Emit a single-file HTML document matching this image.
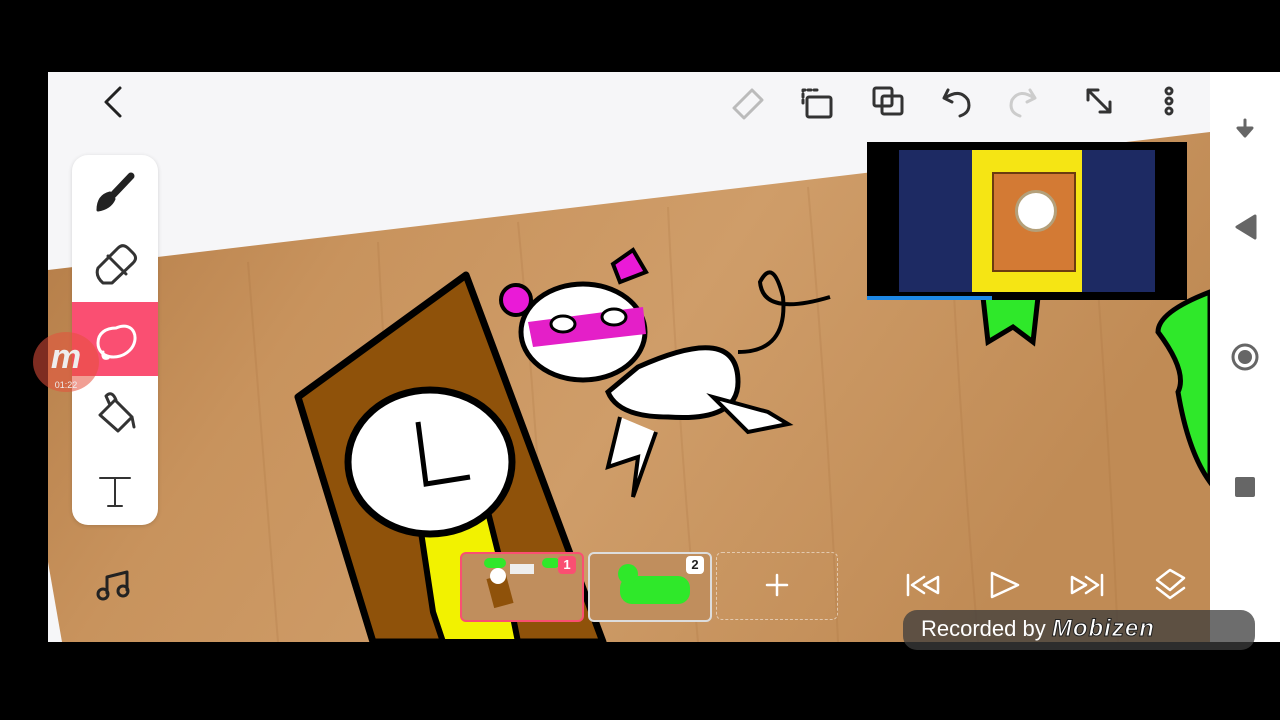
<!DOCTYPE html>
<html><head><meta charset="utf-8"><style>
body{margin:0;width:1280px;height:720px;background:#000;overflow:hidden;font-family:"Liberation Sans",sans-serif;position:relative}
.app{position:absolute;left:48px;top:72px;width:1162px;height:570px;background:#f6f6f8;overflow:hidden}
.nav{position:absolute;left:1210px;top:72px;width:70px;height:570px;background:#fff}
.tool{position:absolute;left:72px;top:155px;width:86px;height:370px;background:#fff;border-radius:16px;box-shadow:0 1px 4px rgba(0,0,0,.15)}
.sel{position:absolute;left:72px;top:302px;width:86px;height:74px;background:#fa4f72}
.rec{position:absolute;left:903px;top:610px;width:352px;height:40px;background:rgba(60,60,60,.75);border-radius:14px;color:#fff;font-size:22px;line-height:38px;padding-left:18px;box-sizing:border-box}
.rec b{font-style:italic;font-weight:900;font-size:24px;letter-spacing:1px;color:#fff;-webkit-text-stroke:1px #222}
</style></head><body>
<div class="app">
<svg width="1162" height="570" style="position:absolute;left:0;top:0">
<defs><linearGradient id="w" x1="0" x2="1" y1="0" y2="0.3">
<stop offset="0" stop-color="#b27a45"/><stop offset="0.3" stop-color="#c8935d"/><stop offset="0.6" stop-color="#cf9d69"/><stop offset="1" stop-color="#c08b55"/></linearGradient></defs>
<polygon points="0,198 1162,60 1162,570 14,570 0,490" fill="url(#w)"/>
<g stroke="#a06a36" stroke-width="2" opacity=".18" fill="none">
<path d="M200,190 Q215,380 230,570 M330,170 Q340,370 360,570 M470,150 Q490,360 500,570 M620,135 Q630,350 650,570 M760,115 Q780,340 790,570 M900,100 Q910,330 930,570 M1040,85 Q1060,330 1070,570"/></g>
<path d="M250,325 L418,203 L555,570 L325,570 Z" fill="#8f520a" stroke="#000" stroke-width="7" stroke-linejoin="round"/>
<path d="M370,440 L385,540 L395,570 L470,570 L460,520 L440,440 Z" fill="#f2f200" stroke="#000" stroke-width="6"/>
<ellipse cx="382" cy="390" rx="82" ry="72" fill="#fff" stroke="#000" stroke-width="7"/>
<path d="M370,350 L378,412 L422,405" stroke="#000" stroke-width="5" fill="none"/>
<path d="M590,295 Q690,250 690,310 Q690,350 620,345 Q570,345 560,320 Z" fill="#fff" stroke="#000" stroke-width="5"/>
<path d="M572,345 L560,395 L590,385 L585,425 L608,360" fill="#fff" stroke="#000" stroke-width="4"/>
<path d="M665,325 L720,340 L740,352 L700,360 Z" fill="#fff" stroke="#000" stroke-width="4"/>
<ellipse cx="535" cy="260" rx="62" ry="48" fill="#fff" stroke="#000" stroke-width="5"/>
<path d="M480,250 L595,235 L598,262 L485,275 Z" fill="#e41fc8"/>
<circle cx="468" cy="228" r="15" fill="#ea1ad7" stroke="#000" stroke-width="4"/>
<path d="M565,192 L585,178 L598,200 L572,210 Z" fill="#ea1ad7" stroke="#000" stroke-width="4"/>
<ellipse cx="515" cy="252" rx="12" ry="8" fill="#fff" stroke="#000" stroke-width="3"/><ellipse cx="566" cy="245" rx="12" ry="8" fill="#fff" stroke="#000" stroke-width="3"/>
<path d="M690,280 Q740,280 735,225 Q725,185 712,210 Q715,245 782,225" stroke="#000" stroke-width="4" fill="none"/>
<path d="M935,225 L990,225 L985,270 L965,255 L940,270 Z" fill="#2fe82a" stroke="#000" stroke-width="5"/>
<path d="M1162,220 Q1110,240 1110,260 Q1140,300 1130,320 Q1140,380 1162,410 Z" fill="#2fe82a" stroke="#000" stroke-width="5"/>
</svg>
</div>
<div class="nav"></div>
<div style="position:absolute;left:867px;top:142px;width:320px;height:158px;background:#000">
<div style="position:absolute;left:32px;top:8px;width:256px;height:142px;background:#1d2a63"></div>
<div style="position:absolute;left:105px;top:8px;width:110px;height:142px;background:#f5e514"></div>
<div style="position:absolute;left:125px;top:30px;width:80px;height:96px;background:#d37a34;border:2px solid #6b3c10"></div>
<div style="position:absolute;left:148px;top:48px;width:36px;height:36px;border-radius:50%;background:#fff;border:3px solid #b4a07a"></div>
<div style="position:absolute;left:0;top:154px;width:125px;height:4px;background:#1e88e5"></div>
</div>
<div class="tool"></div><div class="sel"></div>
<svg width="1280" height="720" style="position:absolute;left:0;top:0" fill="none" stroke="#333" stroke-width="3" stroke-linecap="round" stroke-linejoin="round">
<path d="M120,88 L106,102 L120,116" stroke="#222"/>
<path d="M131,176 L112,196" stroke="#222" stroke-width="7"/><path d="M110,193 Q98,196 98,210 Q110,208 114,199 Z" fill="#222" stroke="#222"/>
<path d="M98,268 L118,248 Q123,243 129,249 L133,253 Q138,258 133,263 L112,283 L103,283 Q95,276 98,268 Z M108,256 L126,274"/>
<path d="M116,328 C135,320 140,340 130,350 C118,362 98,358 98,343 C98,333 106,328 116,328 Z M103,352 Q102,360 108,358" stroke="#fff"/>
<path d="M100,415 L115,400 L132,417 L118,431 Z M110,405 L106,396 Q112,390 116,400 M132,417 L134,427"/>
<path d="M100,478 L130,478 M115,478 L115,506 M108,506 L122,506" stroke-width="2"/>
<path d="M107,593 L107,577 L127,572 L127,590 M107,577 L127,572" stroke="#222"/><circle cx="103" cy="594" r="5" stroke="#222"/><circle cx="123" cy="591" r="5" stroke="#222"/>
<path d="M734,108 L752,90 L762,100 L744,118 Z" stroke="#bbb"/>
<rect x="807" y="97" width="24" height="20" rx="2" stroke="#333"/><path d="M803,103 L803,90 L818,90" stroke-dasharray="3 3"/>
<rect x="874" y="88" width="18" height="18" rx="2"/><rect x="882" y="96" width="20" height="18" rx="2"/>
<path d="M948,90 L944,98 L952,102 M945,98 Q960,88 968,100 Q972,112 960,116"/>
<path d="M1030,90 L1035,98 L1027,102 M1034,98 Q1020,88 1012,100 Q1008,112 1020,116" stroke="#ccc"/>
<path d="M1088,90 L1110,112 M1088,90 L1088,100 M1088,90 L1098,90 M1110,112 L1110,102 M1110,112 L1100,112"/>
<circle cx="1169" cy="91" r="3"/><circle cx="1169" cy="101" r="3"/><circle cx="1169" cy="111" r="3"/>
<path d="M1245,120 L1245,128 M1238,128 L1252,128 L1245,136 Z" fill="#666" stroke="#666"/>
<path d="M1255,216 L1237,227 L1255,238 Z" fill="#666" stroke="#666"/>
<circle cx="1245" cy="357" r="12" stroke="#666"/><circle cx="1245" cy="357" r="7" fill="#666" stroke="none"/>
<rect x="1235" y="477" width="20" height="20" rx="2" fill="#666" stroke="none"/>
<path d="M777,575 L777,595 M767,585 L787,585" stroke="#fff" stroke-width="2.5"/>
<path d="M908,575 L908,595 M938,577 L924,585 L938,593 Z M924,577 L912,585 L924,593" stroke="#fff" stroke-width="2.5"/>
<path d="M992,573 L1018,585 L992,597 Z" stroke="#fff" stroke-width="2.5"/>
<path d="M1102,575 L1102,595 M1072,577 L1086,585 L1072,593 Z M1086,577 L1098,585 L1086,593" stroke="#fff" stroke-width="2.5"/>
<path d="M1157,580 L1170,570 L1184,578 L1170,590 Z M1157,588 L1170,598 L1184,588" stroke="#fff" stroke-width="2.5"/>
</svg>
<div style="position:absolute;left:460px;top:552px;width:120px;height:66px;border:2px solid #fa4f72;border-radius:6px;background:#c08e5d;overflow:hidden">
<div style="position:absolute;left:28px;top:22px;width:20px;height:30px;background:#8f520a;transform:rotate(-15deg)"></div>
<div style="position:absolute;left:28px;top:14px;width:16px;height:16px;border-radius:50%;background:#fff"></div>
<div style="position:absolute;left:22px;top:4px;width:22px;height:10px;background:#2fe82a;border-radius:5px"></div>
<div style="position:absolute;left:80px;top:4px;width:18px;height:10px;background:#2fe82a;border-radius:5px"></div>
<div style="position:absolute;left:48px;top:10px;width:24px;height:10px;background:#eee"></div></div>
<div style="position:absolute;left:558px;top:556px;width:18px;height:18px;border-radius:4px;background:#fa4f72;color:#fff;font-size:13px;text-align:center;line-height:18px;font-weight:bold">1</div>
<div style="position:absolute;left:588px;top:552px;width:120px;height:66px;border:2px solid #ddd;border-radius:6px;background:#c08e5d"><div style="position:absolute;left:30px;top:22px;width:70px;height:28px;background:#2fe82a;border-radius:12px"></div><div style="position:absolute;left:28px;top:10px;width:20px;height:20px;background:#2fe82a;border-radius:50%"></div></div>
<div style="position:absolute;left:686px;top:556px;width:18px;height:18px;border-radius:4px;background:#fff;color:#222;font-size:13px;text-align:center;line-height:18px;font-weight:bold">2</div>
<div style="position:absolute;left:716px;top:552px;width:120px;height:66px;border:1px dashed rgba(255,255,255,.5);border-radius:6px"></div>
<div style="position:absolute;left:33px;top:332px;width:66px;height:60px;border-radius:50%;background:rgba(230,80,60,.55);color:#eee;text-align:center;font-size:34px;font-weight:bold;font-style:italic;line-height:50px">m<div style="font-size:9px;line-height:6px;font-style:normal;font-weight:normal">01:22</div></div>
<div class="rec">Recorded by <b>Mobizen</b></div>
</body></html>
